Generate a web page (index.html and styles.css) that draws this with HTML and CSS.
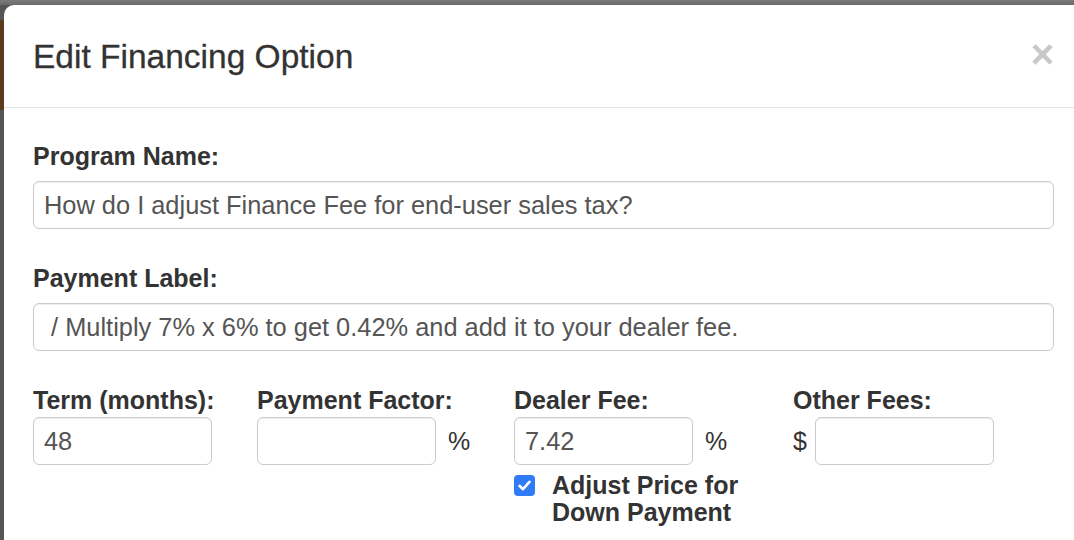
FILE: index.html
```html
<!DOCTYPE html>
<html lang="en">
  <head>
    <meta charset="UTF-8" />
    <meta name="viewport" content="width=device-width, initial-scale=1.0" />
    <title>Edit Financing Option</title>
    <link rel="stylesheet" href="styles.css">
  </head>
  <body>
    <!-- Modal dialog over the dimmed page -->
    <div class="modal">
      <div class="modal-header">
        <h4 class="modal-title">Edit Financing Option</h4>
        <button class="close" type="button">&times;</button>
      </div>

      <div class="modal-body">
        <div class="form-group">
          <label for="program-name">Program Name:</label>
          <input type="text" id="program-name" class="form-control" value="How do I adjust Finance Fee for end-user sales tax?" />
        </div>

        <div class="form-group">
          <label for="payment-label">Payment Label:</label>
          <input type="text" id="payment-label" class="form-control" value=" / Multiply 7% x 6% to get 0.42% and add it to your dealer fee." />
        </div>

        <div class="fee-row">
          <div class="field">
            <label for="term">Term (months):</label>
            <div class="input-wrap">
              <input type="text" id="term" class="form-control small" value="48" />
            </div>
          </div>
          <div class="field">
            <label for="factor">Payment Factor:</label>
            <div class="input-wrap">
              <input type="text" id="factor" class="form-control small" value="" />
              <span class="unit">%</span>
            </div>
          </div>
          <div class="field">
            <label for="dealer-fee">Dealer Fee:</label>
            <div class="input-wrap">
              <input type="text" id="dealer-fee" class="form-control small" value="7.42" />
              <span class="unit">%</span>
            </div>
            <div class="check-row">
              <span class="check-box">
                <svg width="15" height="15" viewBox="0 0 15 15">
                  <path d="M2.5 7.8 L6 11.2 L12.5 3.8" fill="none" stroke="#fff" stroke-width="2.6" stroke-linecap="round" stroke-linejoin="round" />
                </svg>
              </span>
              <span class="check-label">Adjust Price for Down Payment</span>
            </div>
          </div>
          <div class="field">
            <label for="other-fees">Other Fees:</label>
            <div class="input-wrap">
              <span class="prefix">$</span>
              <input type="text" id="other-fees" class="form-control small" value="" />
            </div>
          </div>
        </div>
      </div>
    </div>
  </body>
</html>
```

FILE: styles.css
```css
body {
  margin: 0;
  height: 540px;
  overflow: hidden;
  font-family: "Liberation Sans", Arial, sans-serif;
  color: #333;
  background:
    linear-gradient(#7a7a7a, #6a6a6a) 0 0 / 100% 5px no-repeat,
    linear-gradient(#5c3b1c, #5c3b1c) 0 20px / 4px 90px no-repeat,
    #565656;
}
.modal {
  margin: 5px 0 0 4px;
  width: 1079px;
  height: 535px;
  background: #fff;
  border-radius: 10px 10px 0 0;
}
.modal-header {
  display: flex;
  justify-content: space-between;
  align-items: flex-start;
  padding: 34px 29px 32px;
  border-bottom: 1px solid #e5e5e5;
}
.modal-title {
  margin: 0;
  font-size: 33.5px;
  line-height: 36px;
  font-weight: normal;
  color: #333;
  -webkit-text-stroke: 0.3px #333;
}
.close {
  margin: -3px 0 0;
  padding: 0;
  border: none;
  background: none;
  font-family: "Liberation Sans", Arial, sans-serif;
  font-size: 40px;
  font-weight: bold;
  line-height: 36px;
  color: #c8c8c8;
  cursor: pointer;
}
.modal-body {
  padding: 33px 29px 0;
}
.form-group {
  margin-bottom: 34px;
}
label,
.check-label {
  display: block;
  font-size: 25px;
  font-weight: bold;
  line-height: 30px;
  color: #333;
}
.form-group label {
  margin-bottom: 10px;
}
.form-control {
  display: block;
  box-sizing: border-box;
  width: 100%;
  height: 48px;
  padding: 0 10px;
  border: 1px solid #ccc;
  border-radius: 6px;
  box-shadow: inset 0 1px 1px rgba(0, 0, 0, 0.075);
  font-family: "Liberation Sans", Arial, sans-serif;
  font-size: 25.4px;
  color: #555;
  background: #fff;
}
/* Bottom row of short fields */
.fee-row {
  display: grid;
  grid-template-columns: 224px 257px 279px 1fr;
}
.field label {
  margin-bottom: 2px;
}
.input-wrap {
  display: flex;
  align-items: center;
}
.form-control.small {
  width: 179px;
}
.unit {
  margin-left: 12px;
  font-size: 25px;
}
.prefix {
  margin-right: 8px;
  font-size: 25px;
}
.check-row {
  display: flex;
  align-items: flex-start;
  margin-top: 7px;
}
.check-box {
  display: flex;
  align-items: center;
  justify-content: center;
  flex: none;
  width: 21px;
  height: 21px;
  margin-top: 3px;
  border-radius: 4px;
  background: #2f7cf6;
}
.check-label {
  width: 210px;
  margin-left: 17px;
  line-height: 27px;
}
```
